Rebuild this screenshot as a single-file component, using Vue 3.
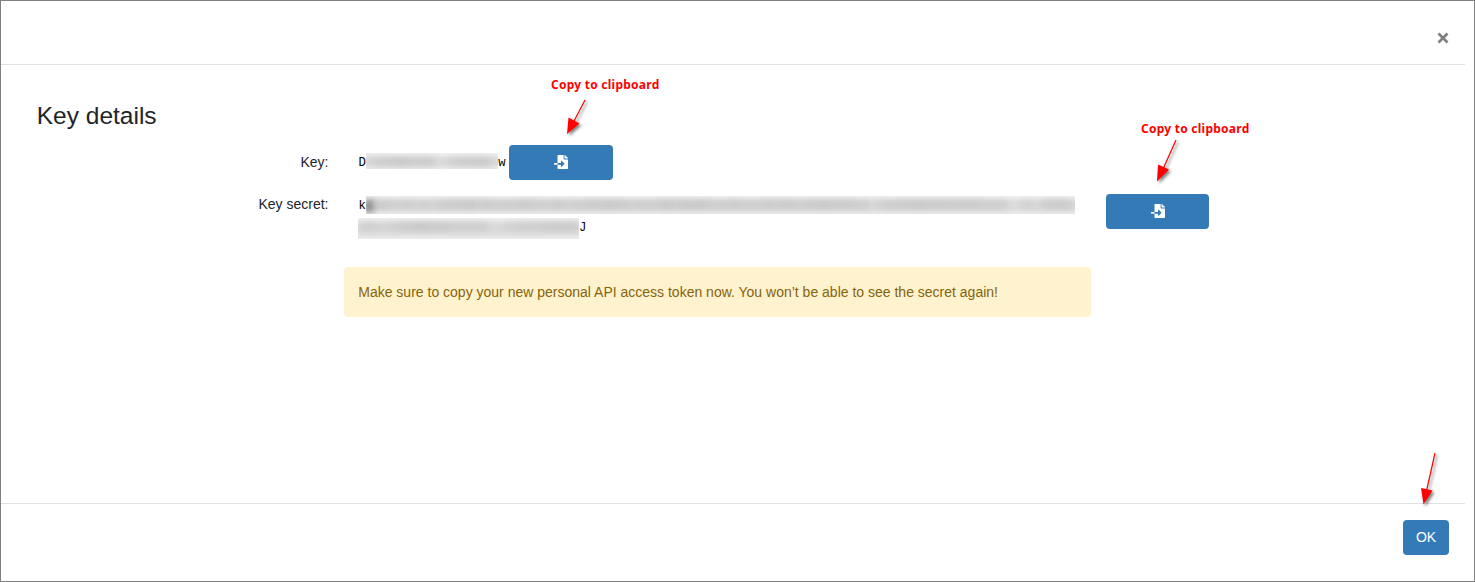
<script setup>
const icon = 'M16 288c-8.800 0-16 7.200-16 16v32c0 8.800 7.200 16 16 16h112v-64H16zm489-183L407.100 7c-4.500-4.500-10.600-7-17-7H384v128h128v-6.100c0-6.300-2.500-12.400-7-16.900zm-153 31V0H152c-13.300 0-24 10.700-24 24v264h128v-65.200c0-14.300 17.300-21.400 27.400-11.300L379 308c6.600 6.700 6.600 17.400 0 24l-95.700 96.400c-10.100 10.100-27.400 3-27.400-11.300V352H128v136c0 13.300 10.700 24 24 24h336c13.300 0 24-10.700 24-24V160H376c-13.200 0-24-10.800-24-24z'

// Opacity of each cell in an obscured value.
const cells = (pattern) => [...pattern].map((c) => Number(c) / 10)
const keyCells = cells('3455665555124555652')
const secretFirst = cells('9665455353556667565555665546545566676645555766767655565555656655667666655245566676665666655551144256664')
const secretSecond = cells('4543456677666555553234555566666')
</script>

<template>
  <div class="dialog">
    <header class="head"><svg class="close" viewBox="0 0 12 12"><path d="M1.500 1.500 10.500 10.500M10.500 1.500 1.500 10.500" /></svg></header>

    <main class="body">
      <h1>Key details</h1>
      <div class="row key-row">
        <div class="label">Key:</div>
        <div class="value single">
          <code>D</code><span class="mask key-mask"><i v-for="(o, n) in keyCells" :key="n" :style="{ opacity: o }"></i></span><code class="last">w</code>
        </div>
        <button class="btn copy"><svg viewBox="0 0 512 512"><path :d="icon" /></svg></button>
      </div>
      <div class="row secret-row">
        <div class="label">Key secret:</div>
        <div class="value secret">
          <div class="line"><code class="lead">k</code><span class="mask first"><i v-for="(o, n) in secretFirst" :key="n" :style="{ opacity: o }"></i></span></div>
          <div class="line second-line"><span class="mask second"><i v-for="(o, n) in secretSecond" :key="n" :style="{ opacity: o }"></i></span><code class="last">J</code></div>
        </div>
        <button class="btn copy"><svg viewBox="0 0 512 512"><path :d="icon" /></svg></button>
      </div>
      <div class="alert">Make sure to copy your new personal API access token now. You won’t be able to see the secret again!</div>
    </main>

    <footer class="foot"><button class="btn ok">OK</button></footer>

    <span class="note note-key">Copy to clipboard</span>
    <span class="note note-secret">Copy to clipboard</span>
    <svg class="arrows" viewBox="0 0 1475 582">
      <g class="arrow">
        <path class="shaft" d="M585 100 573 123" /><path class="tip" d="M567 134 568.500 117.500 579.500 123.500Z" />
      </g>
      <g class="arrow">
        <path class="shaft" d="M1176 140 1163 169" /><path class="tip" d="M1157 181.500 1158 164.500 1169 169.500Z" />
      </g>
      <g class="arrow">
        <path class="shaft" d="M1435 453 1426.500 491" /><path class="tip" d="M1423.500 504.500 1421 488 1432.500 490.500Z" />
      </g>
    </svg>
  </div>
</template>

<style>
body { margin: 0; }
</style>

<style scoped>
* { box-sizing: border-box; }
.dialog {
  position: relative;
  display: flex;
  flex-direction: column;
  width: 1475px;
  height: 582px;
  overflow: hidden;
  border: 1px solid #808080;
  background: #fff;
  color: #212529;
  font: 14px/21px "Liberation Sans", Arial, sans-serif;
}
.head {
  width: 1464px;
  height: 64px;
  flex: none;
  display: flex;
  justify-content: flex-end;
  padding: 31px 16px 0 0;
  border-bottom: 1px solid #dee2e6;
}
.close { width: 12px; height: 12px; fill: none; stroke: #7f7f7f; stroke-width: 2.700; }
.body { height: 438px; flex: none; padding: 36px 0 0 35.750px; }
h1 { margin: 0; font-size: 24.500px; line-height: 29px; font-weight: 400; }
.row { display: flex; align-items: flex-start; }
.key-row { margin-top: 15px; height: 49px; }
.secret-row { height: 73px; }
.label { width: 291.750px; margin-right: 29.500px; text-align: right; }
.key-row .label { padding-top: 7px; }
.value { display: flex; }
.single { width: 151px; padding-top: 7px; }
.secret { display: block; width: 748px; }
.line { display: flex; height: 22px; }
.second-line { margin-top: 1px; }
code { padding-top: 1px; margin-left: .400px; color: #000; font: 12.250px/21px "Liberation Mono", monospace; }
.lead { padding-top: 2px; }
.last { margin-left: .100px; }
.mask {
  display: flex;
  flex: none;
  overflow: hidden;
  background: linear-gradient(#f1f1f1, #e3e3e3 35%, #e0e0e0 70%, #ebebeb);
}
.mask i { flex: 1; height: 9px; margin: 4px -1px 0; background: #bababa; filter: blur(3px); }
.key-mask { width: 132.500px; height: 16px; margin-top: 1px; }
.first { width: 709px; height: 18px; margin-top: 2px; }
.first i:first-child { height: 12px; background: #777; }
.second { width: 221px; height: 21px; margin-top: 1px; }
.btn {
  display: flex;
  align-items: center;
  justify-content: center;
  height: 35px;
  padding: 0;
  border: 0;
  border-radius: 4px;
  background: #337ab7;
  color: #fff;
  font: 14px/21px "Liberation Sans", Arial, sans-serif;
}
.copy { width: 104px; }
.secret-row .copy { width: 103px; }
.copy svg { width: 14px; height: 14px; margin-bottom: 2px; fill: #fff; }
.alert {
  width: 747px;
  height: 50px;
  margin-left: 307.250px;
  padding: 15px 14.250px;
  border-radius: 4px;
  background: #fff2cf;
  color: #86640a;
  white-space: nowrap;
}
.foot {
  width: 1464px;
  height: 78px;
  display: flex;
  justify-content: flex-end;
  padding: 16px 16px 0 0;
  border-top: 1px solid #dee2e6;
}
.ok { width: 46px; }
.note {
  position: absolute;
  color: #f00;
  font: 700 12px/16px "Noto Sans", sans-serif;
  letter-spacing: .250px;
  white-space: nowrap;
}
.note-key { left: 550px; top: 76px; }
.note-secret { left: 1140px; top: 120px; }
.arrows { position: absolute; left: -1px; top: -1px; width: 1475px; height: 582px; pointer-events: none; }
.arrow { filter: drop-shadow(2px 2px 1.500px rgba(0, 0, 0, .5)); }
.shaft { stroke: #f00; stroke-width: 1.200; }
.tip { fill: #f00; }
</style>
